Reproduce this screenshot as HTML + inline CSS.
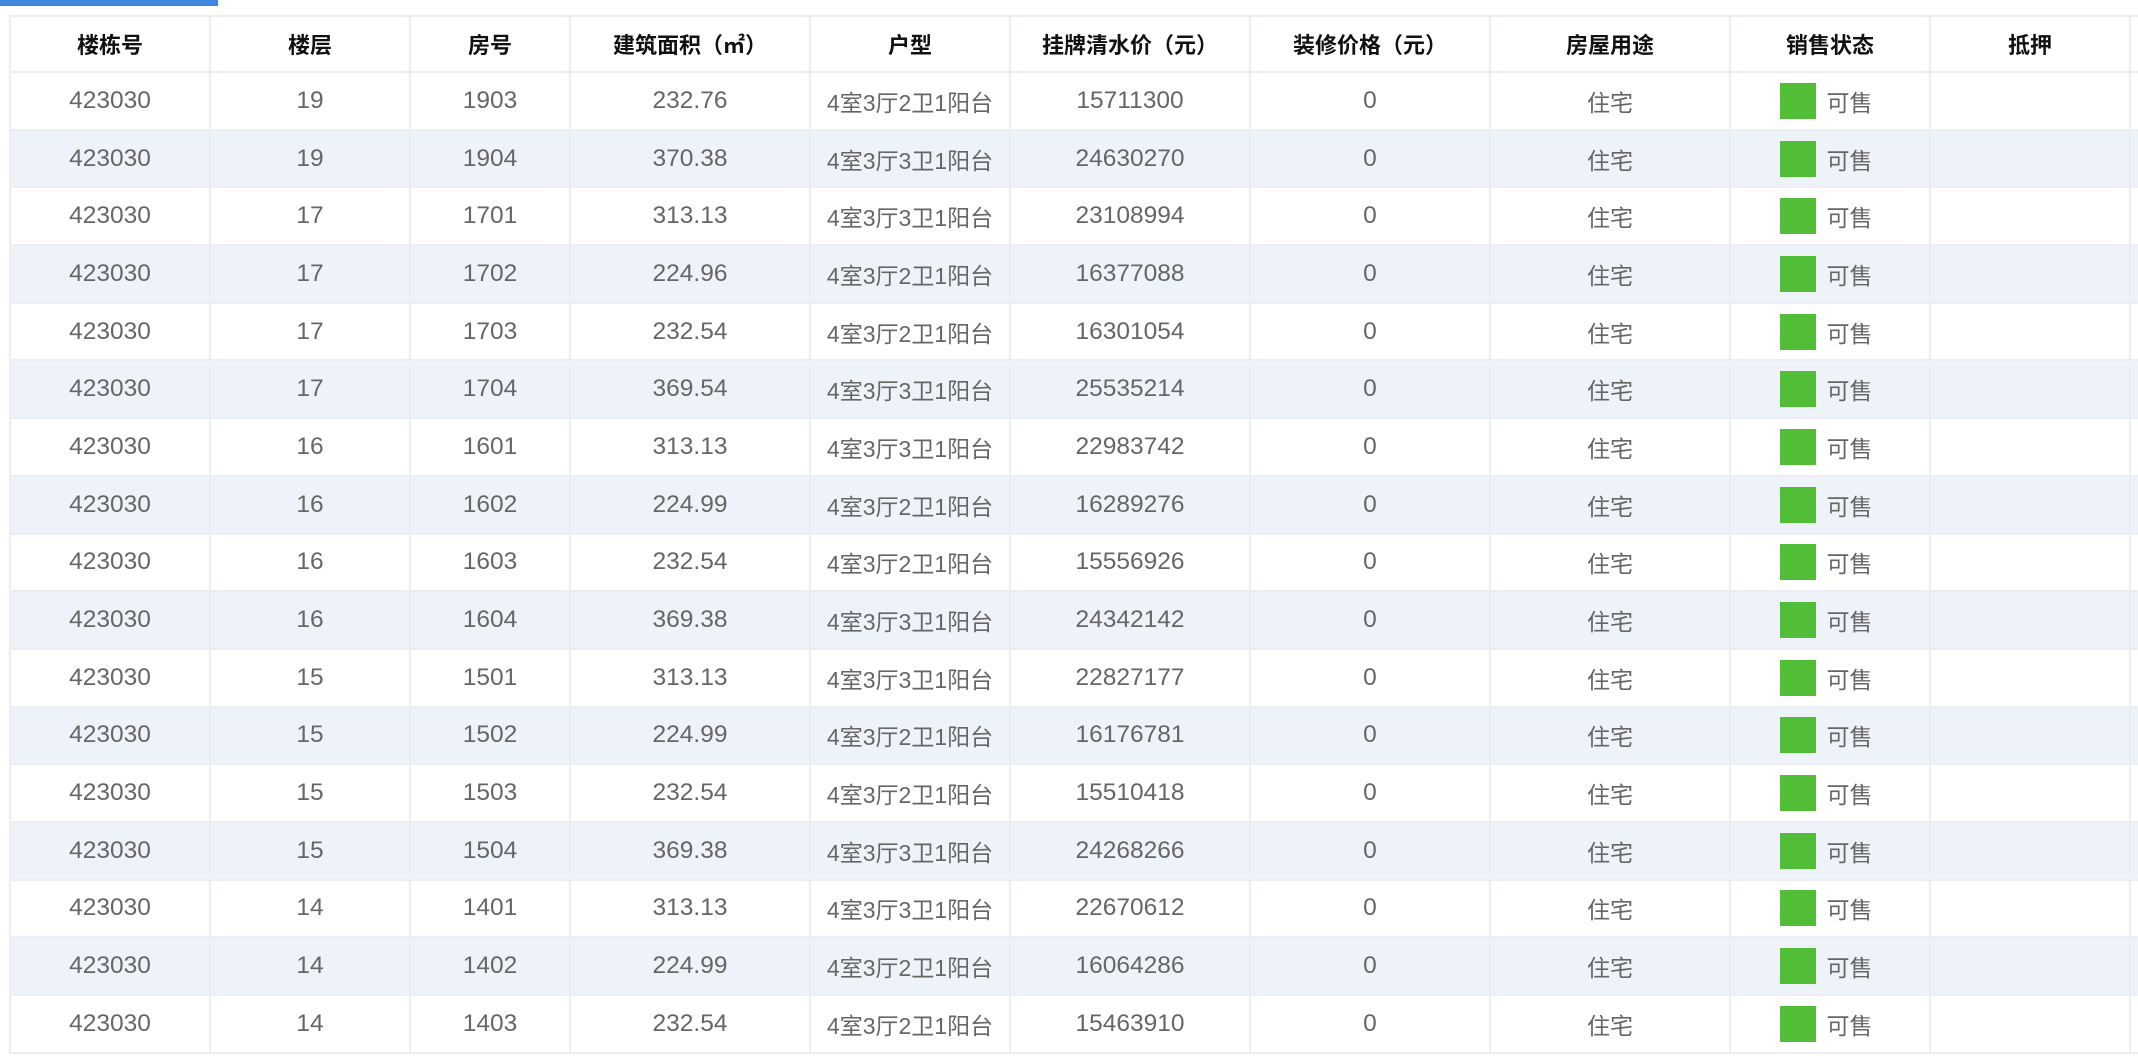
<!DOCTYPE html>
<html><head><meta charset="utf-8">
<style>
html,body{margin:0;padding:0;background:#fff;width:2138px;height:1064px;overflow:hidden;}
body{font-family:"Liberation Sans","Noto Sans CJK SC",sans-serif;position:relative;}
.bar{position:absolute;left:0;top:0;width:218px;height:6px;background:#3f87e0;}
.wrap{position:absolute;left:9px;top:15px;width:2200px;}
table{border-collapse:collapse;table-layout:fixed;width:2320px;}
td,th{border:2px solid #ebeef5;text-align:center;padding:0;white-space:nowrap;overflow:hidden;}
th{height:54px;font-size:22px;font-weight:bold;color:#111;}
td{height:55.7px;font-size:24.5px;color:#666;}
td.c{font-size:23px;}
tr.s td{background:#eef2f9;}
.g{display:inline-block;width:36px;height:36px;background:#52be38;vertical-align:middle;margin-right:11px;margin-left:-8px;}
.st{display:inline-block;vertical-align:middle;font-size:23px;}
</style></head><body>
<div class="bar"></div>
<div class="wrap"><table>
<colgroup><col style="width:200px"><col style="width:200px"><col style="width:160px"><col style="width:240px"><col style="width:200px"><col style="width:240px"><col style="width:240px"><col style="width:240px"><col style="width:200px"><col style="width:200px"><col style="width:200px"></colgroup>
<tr><th>楼栋号</th><th>楼层</th><th>房号</th><th>建筑面积（㎡）</th><th>户型</th><th>挂牌清水价（元）</th><th>装修价格（元）</th><th>房屋用途</th><th>销售状态</th><th>抵押</th><th></th></tr>
<tr><td>423030</td><td>19</td><td>1903</td><td>232.76</td><td class="c">4室3厅2卫1阳台</td><td>15711300</td><td>0</td><td class="c">住宅</td><td><span class="g"></span><span class="st">可售</span></td><td></td><td></td></tr>
<tr class="s"><td>423030</td><td>19</td><td>1904</td><td>370.38</td><td class="c">4室3厅3卫1阳台</td><td>24630270</td><td>0</td><td class="c">住宅</td><td><span class="g"></span><span class="st">可售</span></td><td></td><td></td></tr>
<tr><td>423030</td><td>17</td><td>1701</td><td>313.13</td><td class="c">4室3厅3卫1阳台</td><td>23108994</td><td>0</td><td class="c">住宅</td><td><span class="g"></span><span class="st">可售</span></td><td></td><td></td></tr>
<tr class="s"><td>423030</td><td>17</td><td>1702</td><td>224.96</td><td class="c">4室3厅2卫1阳台</td><td>16377088</td><td>0</td><td class="c">住宅</td><td><span class="g"></span><span class="st">可售</span></td><td></td><td></td></tr>
<tr><td>423030</td><td>17</td><td>1703</td><td>232.54</td><td class="c">4室3厅2卫1阳台</td><td>16301054</td><td>0</td><td class="c">住宅</td><td><span class="g"></span><span class="st">可售</span></td><td></td><td></td></tr>
<tr class="s"><td>423030</td><td>17</td><td>1704</td><td>369.54</td><td class="c">4室3厅3卫1阳台</td><td>25535214</td><td>0</td><td class="c">住宅</td><td><span class="g"></span><span class="st">可售</span></td><td></td><td></td></tr>
<tr><td>423030</td><td>16</td><td>1601</td><td>313.13</td><td class="c">4室3厅3卫1阳台</td><td>22983742</td><td>0</td><td class="c">住宅</td><td><span class="g"></span><span class="st">可售</span></td><td></td><td></td></tr>
<tr class="s"><td>423030</td><td>16</td><td>1602</td><td>224.99</td><td class="c">4室3厅2卫1阳台</td><td>16289276</td><td>0</td><td class="c">住宅</td><td><span class="g"></span><span class="st">可售</span></td><td></td><td></td></tr>
<tr><td>423030</td><td>16</td><td>1603</td><td>232.54</td><td class="c">4室3厅2卫1阳台</td><td>15556926</td><td>0</td><td class="c">住宅</td><td><span class="g"></span><span class="st">可售</span></td><td></td><td></td></tr>
<tr class="s"><td>423030</td><td>16</td><td>1604</td><td>369.38</td><td class="c">4室3厅3卫1阳台</td><td>24342142</td><td>0</td><td class="c">住宅</td><td><span class="g"></span><span class="st">可售</span></td><td></td><td></td></tr>
<tr><td>423030</td><td>15</td><td>1501</td><td>313.13</td><td class="c">4室3厅3卫1阳台</td><td>22827177</td><td>0</td><td class="c">住宅</td><td><span class="g"></span><span class="st">可售</span></td><td></td><td></td></tr>
<tr class="s"><td>423030</td><td>15</td><td>1502</td><td>224.99</td><td class="c">4室3厅2卫1阳台</td><td>16176781</td><td>0</td><td class="c">住宅</td><td><span class="g"></span><span class="st">可售</span></td><td></td><td></td></tr>
<tr><td>423030</td><td>15</td><td>1503</td><td>232.54</td><td class="c">4室3厅2卫1阳台</td><td>15510418</td><td>0</td><td class="c">住宅</td><td><span class="g"></span><span class="st">可售</span></td><td></td><td></td></tr>
<tr class="s"><td>423030</td><td>15</td><td>1504</td><td>369.38</td><td class="c">4室3厅3卫1阳台</td><td>24268266</td><td>0</td><td class="c">住宅</td><td><span class="g"></span><span class="st">可售</span></td><td></td><td></td></tr>
<tr><td>423030</td><td>14</td><td>1401</td><td>313.13</td><td class="c">4室3厅3卫1阳台</td><td>22670612</td><td>0</td><td class="c">住宅</td><td><span class="g"></span><span class="st">可售</span></td><td></td><td></td></tr>
<tr class="s"><td>423030</td><td>14</td><td>1402</td><td>224.99</td><td class="c">4室3厅2卫1阳台</td><td>16064286</td><td>0</td><td class="c">住宅</td><td><span class="g"></span><span class="st">可售</span></td><td></td><td></td></tr>
<tr><td>423030</td><td>14</td><td>1403</td><td>232.54</td><td class="c">4室3厅2卫1阳台</td><td>15463910</td><td>0</td><td class="c">住宅</td><td><span class="g"></span><span class="st">可售</span></td><td></td><td></td></tr>
</table></div>
</body></html>
